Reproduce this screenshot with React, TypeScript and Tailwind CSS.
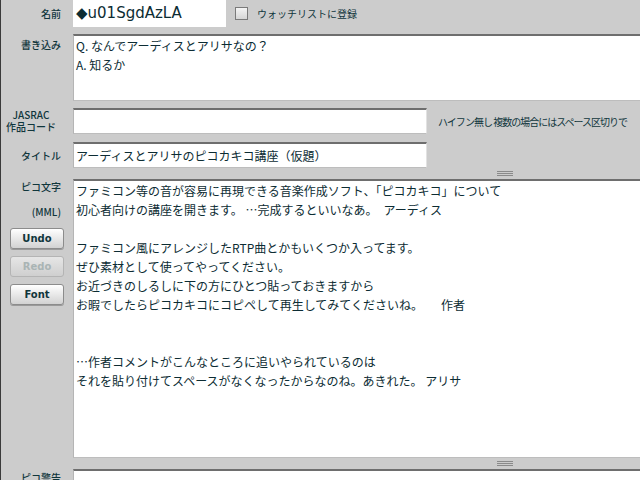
import React from "react";

const jp = { fontFamily: '"Noto Sans CJK JP", "DejaVu Sans", sans-serif' };
const latin = { fontFamily: '"DejaVu Sans", "Noto Sans CJK JP", sans-serif' };

const picoText = `ファミコン等の音が容易に再現できる音楽作成ソフト、「ピコカキコ」について
初心者向けの講座を開きます。 …完成するといいなあ。　アーディス

ファミコン風にアレンジしたRTP曲とかもいくつか入ってます。
ぜひ素材として使ってやってください。
お近づきのしるしに下の方にひとつ貼っておきますから
お暇でしたらピコカキコにコピペして再生してみてくださいね。　　作者


…作者コメントがこんなところに追いやられているのは
それを貼り付けてスペースがなくなったからなのね。あきれた。 アリサ`;

const Label = ({ children, className = "" }: any) => (
  <div className={"w-[72px] shrink-0 pr-[12px] text-right text-[10px] font-medium text-[#10363c] " + className} style={jp}>
    {children}
  </div>
);

const Grip = () => (
  <div className="flex h-[11px] w-[864px] items-center justify-center">
    <div className="flex w-[16px] flex-col gap-[1px]">
      <div className="h-px bg-[#8a8a8a]" />
      <div className="h-px bg-[#8a8a8a]" />
      <div className="h-px bg-[#8a8a8a]" />
    </div>
  </div>
);

const SideButton = ({ label, disabled }: { label: string; disabled?: boolean }) => (
  <button
    disabled={disabled}
    className={
      "ml-[9px] h-[21px] w-[54px] rounded-[3px] border text-[10px] font-bold " +
      (disabled
        ? "border-[#b4b4b4] bg-gradient-to-b from-[#e6e6e6] to-[#cfcfcf] text-[#a9b4b4]"
        : "border-[#8c8c8c] bg-gradient-to-b from-white to-[#d2d2d2] text-[#10363c] shadow-[0_1px_0_#9a9a9a]")
    }
    style={latin}
  >
    {label}
  </button>
);

const inputBox = "border-t-2 border-l border-b border-r border-t-[#6e6e6e] border-l-[#b5b5b5] border-b-[#bdbdbd] border-r-[#e2e2e2] bg-white";

export default function App() {
  return (
    <div className="h-[480px] w-[640px] overflow-hidden border-l border-[#3a3a3a] bg-[#cccccc] text-[#0c2c33]">
      <div className="w-[936px]">
        {/* name row */}
        <div className="flex h-[27px] items-center">
          <Label>名前</Label>
          <div className="flex h-[27px] w-[153px] items-center bg-white pl-[3px] text-[15px] text-[#0c2c33]" style={latin}>
            ◆u01SgdAzLA
          </div>
          <label className="ml-[9px] flex items-center gap-[9px] text-[10px] text-[#10363c]" style={jp}>
            <span className="block h-[13px] w-[13px] border border-[#7a7a7a] bg-gradient-to-b from-[#f4f4f4] to-[#d6d6d6]" />
            ウォッチリストに登録
          </label>
        </div>

        {/* comment */}
        <div className="mt-[7px] flex">
          <Label className="pt-[3px]">書き込み</Label>
          <textarea
            readOnly
            defaultValue={"Q. なんでアーディスとアリサなの？\nA. 知るか"}
            className={"h-[67px] w-[864px] resize-none overflow-hidden px-[2px] text-[12px] leading-[19px] outline-none " + inputBox}
            style={jp}
          />
        </div>

        {/* JASRAC */}
        <div className="mt-[7px] flex h-[26px] items-center">
          <div className="flex w-[72px] shrink-0 justify-end pr-[17px]" style={jp}>
            <div className="flex flex-col items-center text-[10px] font-medium leading-[12px] text-[#10363c]">
              <span>JASRAC</span>
              <span>作品コード</span>
            </div>
          </div>
          <div className={"h-[26px] w-[354px] " + inputBox} />
          <div className="ml-[11px] whitespace-nowrap text-[10px] tracking-[-1px] text-[#10363c]" style={jp}>
            ハイフン無し 複数の場合にはスペース区切りで
          </div>
        </div>

        {/* title */}
        <div className="mt-[8px] flex items-center">
          <Label>タイトル</Label>
          <div className={"flex h-[26px] w-[354px] items-center px-[2px] text-[12px] " + inputBox} style={jp}>
            アーディスとアリサのピコカキコ講座（仮題）
          </div>
        </div>

        <div className="flex">
          <div className="w-[72px] shrink-0" />
          <Grip />
        </div>

        {/* pico text */}
        <div className="flex">
          <div className="flex w-[72px] shrink-0 flex-col">
            <Label className="pt-[1px] leading-[14px]">ピコ文字</Label>
            <Label className="mt-[11px] leading-[14px]">(MML)</Label>
            <div className="mt-[9px] flex flex-col gap-[7px]">
              <SideButton label="Undo" />
              <SideButton label="Redo" disabled />
              <SideButton label="Font" />
            </div>
          </div>
          <textarea
            readOnly
            defaultValue={picoText}
            className={"h-[279px] w-[864px] resize-none overflow-hidden px-[2px] text-[12px] leading-[19px] outline-none " + inputBox}
            style={jp}
          />
        </div>

        <div className="flex">
          <div className="w-[72px] shrink-0" />
          <Grip />
        </div>

        {/* pico warning */}
        <div className="flex">
          <Label className="pt-[1px]">ピコ警告</Label>
          <div className={"h-[40px] w-[864px] " + inputBox} />
        </div>
      </div>
    </div>
  );
}
